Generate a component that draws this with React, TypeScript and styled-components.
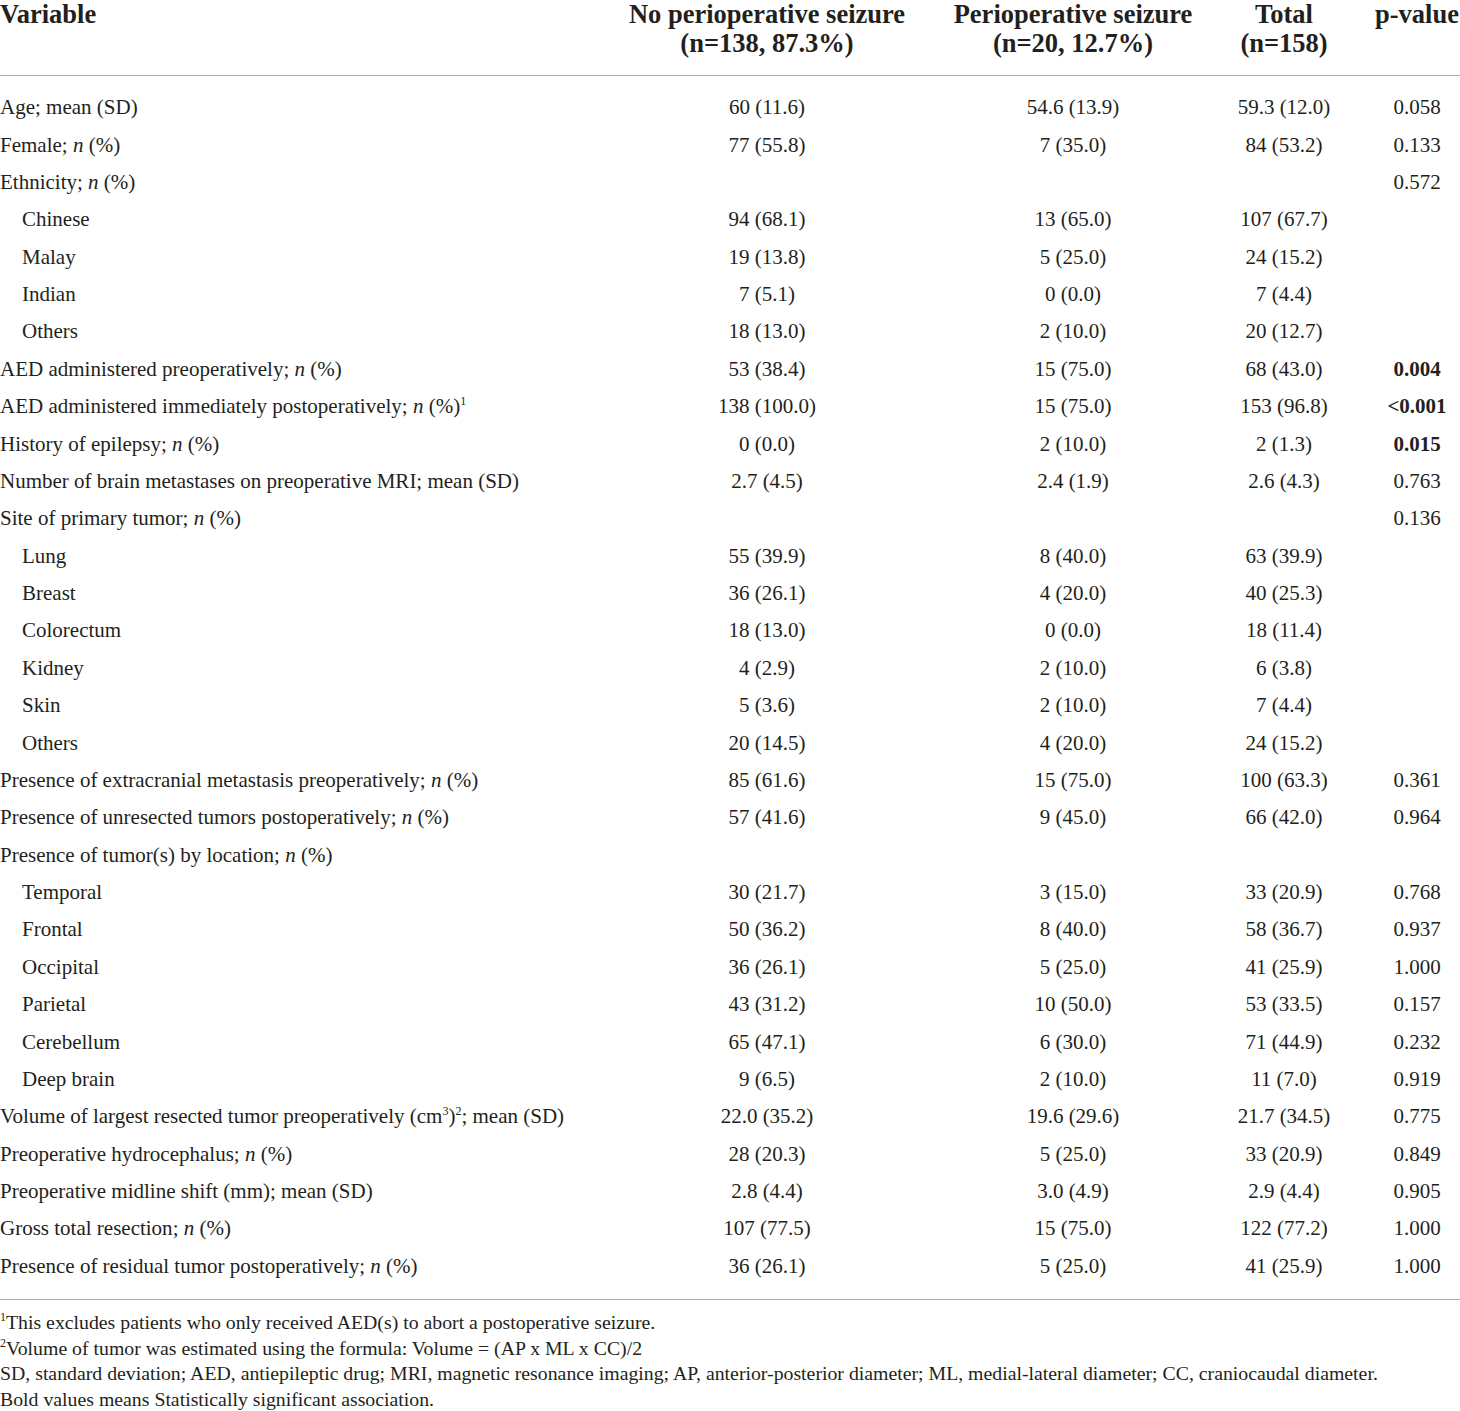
import React from "react"
import styled, { createGlobalStyle } from "styled-components"

const GlobalStyle = createGlobalStyle`
  body {
    margin: 0;
    background: #ffffff;
    color: #231f20;
    font-family: "Liberation Serif", "Times New Roman", serif;
  }
`

const TableDiv = styled.div`
  width: 1460px;
  overflow: hidden;
`

const GRID = "614px 306px 306px 148px 86px"

const HeadRowDiv = styled.div`
  display: grid;
  grid-template-columns: ${GRID};
  height: 76px;
  border-bottom: 1.5px solid #a9abae;
  box-sizing: border-box;
`

const HeadCellDiv = styled.div<{ $left?: boolean; $pr?: number }>`
  font-size: 26.5px;
  font-weight: bold;
  line-height: 28.5px;
  text-align: ${({ $left }) => ($left ? "left" : "center")};
  padding-right: ${({ $pr }) => $pr || 0}px;
  white-space: nowrap;
`

const BodyDiv = styled.div`
  padding: 13px 0 14px;
  border-bottom: 1.5px solid #a9abae;
`

const RowDiv = styled.div`
  display: grid;
  grid-template-columns: ${GRID};
  height: 37.38px;
  align-items: center;
  font-size: 21px;
`

const LabelCellDiv = styled.div<{ $indent?: boolean }>`
  padding-left: ${({ $indent }) => ($indent ? 22 : 0)}px;
  white-space: nowrap;
`

const ValueCellDiv = styled.div<{ $bold?: boolean; $pr?: number }>`
  text-align: center;
  font-weight: ${({ $bold }) => ($bold ? "bold" : "normal")};
  padding-right: ${({ $pr }) => $pr || 0}px;
  white-space: nowrap;
`

const Sup = styled.sup`
  font-size: 12px;
  line-height: 0;
  vertical-align: 8px;
`

const NotesDiv = styled.div`
  padding-top: 10px;
  font-size: 19.8px;
  line-height: 25.7px;
`

const NoteP = styled.p`
  margin: 0;
  white-space: nowrap;
`

type Row = {
  label: React.ReactNode
  indent?: boolean
  values: [string, string, string, string]
  bold?: boolean
}

const N = () => (
  <>
    ; <i>n</i> (%)
  </>
)

const rows: Row[] = [
  { label: "Age; mean (SD)", values: ["60 (11.6)", "54.6 (13.9)", "59.3 (12.0)", "0.058"] },
  { label: <>Female<N /></>, values: ["77 (55.8)", "7 (35.0)", "84 (53.2)", "0.133"] },
  { label: <>Ethnicity<N /></>, values: ["", "", "", "0.572"] },
  { label: "Chinese", indent: true, values: ["94 (68.1)", "13 (65.0)", "107 (67.7)", ""] },
  { label: "Malay", indent: true, values: ["19 (13.8)", "5 (25.0)", "24 (15.2)", ""] },
  { label: "Indian", indent: true, values: ["7 (5.1)", "0 (0.0)", "7 (4.4)", ""] },
  { label: "Others", indent: true, values: ["18 (13.0)", "2 (10.0)", "20 (12.7)", ""] },
  { label: <>AED administered preoperatively<N /></>, values: ["53 (38.4)", "15 (75.0)", "68 (43.0)", "0.004"], bold: true },
  {
    label: (
      <>
        AED administered immediately postoperatively<N />
        <Sup>1</Sup>
      </>
    ),
    values: ["138 (100.0)", "15 (75.0)", "153 (96.8)", "<0.001"],
    bold: true,
  },
  { label: <>History of epilepsy<N /></>, values: ["0 (0.0)", "2 (10.0)", "2 (1.3)", "0.015"], bold: true },
  { label: "Number of brain metastases on preoperative MRI; mean (SD)", values: ["2.7 (4.5)", "2.4 (1.9)", "2.6 (4.3)", "0.763"] },
  { label: <>Site of primary tumor<N /></>, values: ["", "", "", "0.136"] },
  { label: "Lung", indent: true, values: ["55 (39.9)", "8 (40.0)", "63 (39.9)", ""] },
  { label: "Breast", indent: true, values: ["36 (26.1)", "4 (20.0)", "40 (25.3)", ""] },
  { label: "Colorectum", indent: true, values: ["18 (13.0)", "0 (0.0)", "18 (11.4)", ""] },
  { label: "Kidney", indent: true, values: ["4 (2.9)", "2 (10.0)", "6 (3.8)", ""] },
  { label: "Skin", indent: true, values: ["5 (3.6)", "2 (10.0)", "7 (4.4)", ""] },
  { label: "Others", indent: true, values: ["20 (14.5)", "4 (20.0)", "24 (15.2)", ""] },
  { label: <>Presence of extracranial metastasis preoperatively<N /></>, values: ["85 (61.6)", "15 (75.0)", "100 (63.3)", "0.361"] },
  { label: <>Presence of unresected tumors postoperatively<N /></>, values: ["57 (41.6)", "9 (45.0)", "66 (42.0)", "0.964"] },
  { label: <>Presence of tumor(s) by location<N /></>, values: ["", "", "", ""] },
  { label: "Temporal", indent: true, values: ["30 (21.7)", "3 (15.0)", "33 (20.9)", "0.768"] },
  { label: "Frontal", indent: true, values: ["50 (36.2)", "8 (40.0)", "58 (36.7)", "0.937"] },
  { label: "Occipital", indent: true, values: ["36 (26.1)", "5 (25.0)", "41 (25.9)", "1.000"] },
  { label: "Parietal", indent: true, values: ["43 (31.2)", "10 (50.0)", "53 (33.5)", "0.157"] },
  { label: "Cerebellum", indent: true, values: ["65 (47.1)", "6 (30.0)", "71 (44.9)", "0.232"] },
  { label: "Deep brain", indent: true, values: ["9 (6.5)", "2 (10.0)", "11 (7.0)", "0.919"] },
  {
    label: (
      <>
        Volume of largest resected tumor preoperatively (cm<Sup>3</Sup>)<Sup>2</Sup>; mean (SD)
      </>
    ),
    values: ["22.0 (35.2)", "19.6 (29.6)", "21.7 (34.5)", "0.775"],
  },
  { label: <>Preoperative hydrocephalus<N /></>, values: ["28 (20.3)", "5 (25.0)", "33 (20.9)", "0.849"] },
  { label: "Preoperative midline shift (mm); mean (SD)", values: ["2.8 (4.4)", "3.0 (4.9)", "2.9 (4.4)", "0.905"] },
  { label: <>Gross total resection<N /></>, values: ["107 (77.5)", "15 (75.0)", "122 (77.2)", "1.000"] },
  { label: <>Presence of residual tumor postoperatively<N /></>, values: ["36 (26.1)", "5 (25.0)", "41 (25.9)", "1.000"] },
]

export default function App() {
  return (
    <>
      <GlobalStyle />
      <TableDiv>
        <HeadRowDiv>
          <HeadCellDiv $left>Variable</HeadCellDiv>
          <HeadCellDiv>
            No perioperative seizure
            <br />
            (n=138, 87.3%)
          </HeadCellDiv>
          <HeadCellDiv>
            Perioperative seizure
            <br />
            (n=20, 12.7%)
          </HeadCellDiv>
          <HeadCellDiv $pr={32}>
            Total
            <br />
            (n=158)
          </HeadCellDiv>
          <HeadCellDiv>p-value</HeadCellDiv>
        </HeadRowDiv>
        <BodyDiv>
          {rows.map((row, i) => (
            <RowDiv key={i}>
              <LabelCellDiv $indent={row.indent}>{row.label}</LabelCellDiv>
              <ValueCellDiv>{row.values[0]}</ValueCellDiv>
              <ValueCellDiv>{row.values[1]}</ValueCellDiv>
              <ValueCellDiv $pr={32}>{row.values[2]}</ValueCellDiv>
              <ValueCellDiv $bold={row.bold}>{row.values[3]}</ValueCellDiv>
            </RowDiv>
          ))}
        </BodyDiv>
        <NotesDiv>
          <NoteP>
            <Sup>1</Sup>This excludes patients who only received AED(s) to abort a postoperative seizure.
          </NoteP>
          <NoteP>
            <Sup>2</Sup>Volume of tumor was estimated using the formula: Volume = (AP x ML x CC)/2
          </NoteP>
          <NoteP>
            SD, standard deviation; AED, antiepileptic drug; MRI, magnetic resonance imaging; AP,
            anterior-posterior diameter; ML, medial-lateral diameter; CC, craniocaudal diameter.
          </NoteP>
          <NoteP>Bold values means Statistically significant association.</NoteP>
        </NotesDiv>
      </TableDiv>
    </>
  )
}
